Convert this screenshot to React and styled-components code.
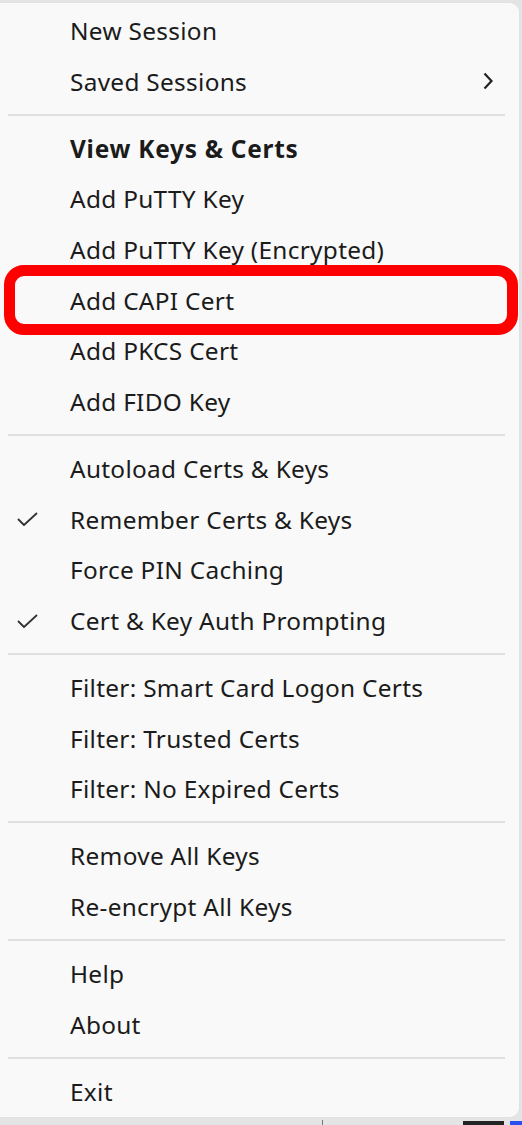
import React from "react";
import styled, { createGlobalStyle } from "styled-components";

const GlobalStyle = createGlobalStyle`
  html, body {
    margin: 0;
    padding: 0;
    background: #e4e4e4;
  }
  body {
    font-family: "Noto Sans", "Open Sans", sans-serif;
  }
`;

const Page = styled.div`
  width: 522px;
  height: 1125px;
  overflow: hidden;
  display: flex;
  flex-direction: column;
  background: #e4e4e4;
`;

const Menu = styled.div`
  margin-top: 3px;
  width: 519px;
  height: 1114px;
  box-sizing: border-box;
  padding-top: 2px;
  background: #f9f9f9;
  border-radius: 0 9px 9px 0;
  box-shadow: 0 0 0 1px #e2e2e2;
  display: flex;
  flex-direction: column;
`;

const Row = styled.div`
  position: relative;
  height: 50.7px;
  flex-shrink: 0;
  display: grid;
  grid-template-columns: 70px 1fr 48px;
  align-items: center;
  font-size: 24.4px;
  font-weight: ${(p) => (p.$bold ? 700 : 400)};
  letter-spacing: ${(p) => (p.$bold ? "0.75px" : "0.3px")};
  color: #1b1b1b;
`;

const CheckCell = styled.span`
  display: flex;
  align-items: center;
  padding-left: 17px;
`;

const Label = styled.span`
  white-space: nowrap;
`;

const ArrowCell = styled.span`
  display: flex;
  align-items: center;
  padding-left: 12px;
`;

const Separator = styled.div`
  height: 16.3px;
  flex-shrink: 0;
  display: flex;
  align-items: center;
  padding: 0 14px 0 8px;

  &::after {
    content: "";
    flex: 1;
    height: 2px;
    background: #e0e0e0;
  }
`;

const Highlight = styled.div`
  position: absolute;
  top: -10px;
  bottom: -10px;
  left: 4px;
  right: 1px;
  border: 11px solid #ff0000;
  border-radius: 20px;
  pointer-events: none;
`;

const Taskbar = styled.div`
  flex: 1;
  display: flex;
  align-items: flex-end;
`;

const TaskTick = styled.span`
  margin-left: 322px;
  width: 1px;
  height: 5px;
  background: #777;
`;

const TaskDark = styled.span`
  margin-left: 140px;
  width: 42px;
  height: 4px;
  background: #222;
`;

const TaskBlue = styled.span`
  margin-left: 6px;
  width: 12px;
  height: 4px;
  background: #2a4ff0;
`;

const Check = () => (
  <svg width="21" height="14" viewBox="0 0 21 14">
    <polyline
      points="1,7 7,13 20,1"
      fill="none"
      stroke="#333"
      strokeWidth="1.8"
      strokeLinejoin="round"
    />
  </svg>
);

const Chevron = () => (
  <svg width="10" height="18" viewBox="0 0 10 18">
    <polyline
      points="1.5,1.5 8.5,9 1.5,16.5"
      fill="none"
      stroke="#222"
      strokeWidth="2.2"
    />
  </svg>
);

const menu = [
  { label: "New Session" },
  { label: "Saved Sessions", submenu: true },
  "sep",
  { label: "View Keys & Certs", bold: true },
  { label: "Add PuTTY Key" },
  { label: "Add PuTTY Key (Encrypted)" },
  { label: "Add CAPI Cert", marked: true },
  { label: "Add PKCS Cert" },
  { label: "Add FIDO Key" },
  "sep",
  { label: "Autoload Certs & Keys" },
  { label: "Remember Certs & Keys", checked: true },
  { label: "Force PIN Caching" },
  { label: "Cert & Key Auth Prompting", checked: true },
  "sep",
  { label: "Filter: Smart Card Logon Certs" },
  { label: "Filter: Trusted Certs" },
  { label: "Filter: No Expired Certs" },
  "sep",
  { label: "Remove All Keys" },
  { label: "Re-encrypt All Keys" },
  "sep",
  { label: "Help" },
  { label: "About" },
  "sep",
  { label: "Exit" },
];

const App = () => {
  return (
    <>
      <GlobalStyle />
      <Page>
        <Menu>
          {menu.map((item, i) =>
            item === "sep" ? (
              <Separator key={i} />
            ) : (
              <Row key={i} $bold={item.bold}>
                <CheckCell>{item.checked && <Check />}</CheckCell>
                <Label>{item.label}</Label>
                <ArrowCell>{item.submenu && <Chevron />}</ArrowCell>
                {item.marked && <Highlight />}
              </Row>
            )
          )}
        </Menu>
        <Taskbar>
          <TaskTick />
          <TaskDark />
          <TaskBlue />
        </Taskbar>
      </Page>
    </>
  );
};

export default App;
